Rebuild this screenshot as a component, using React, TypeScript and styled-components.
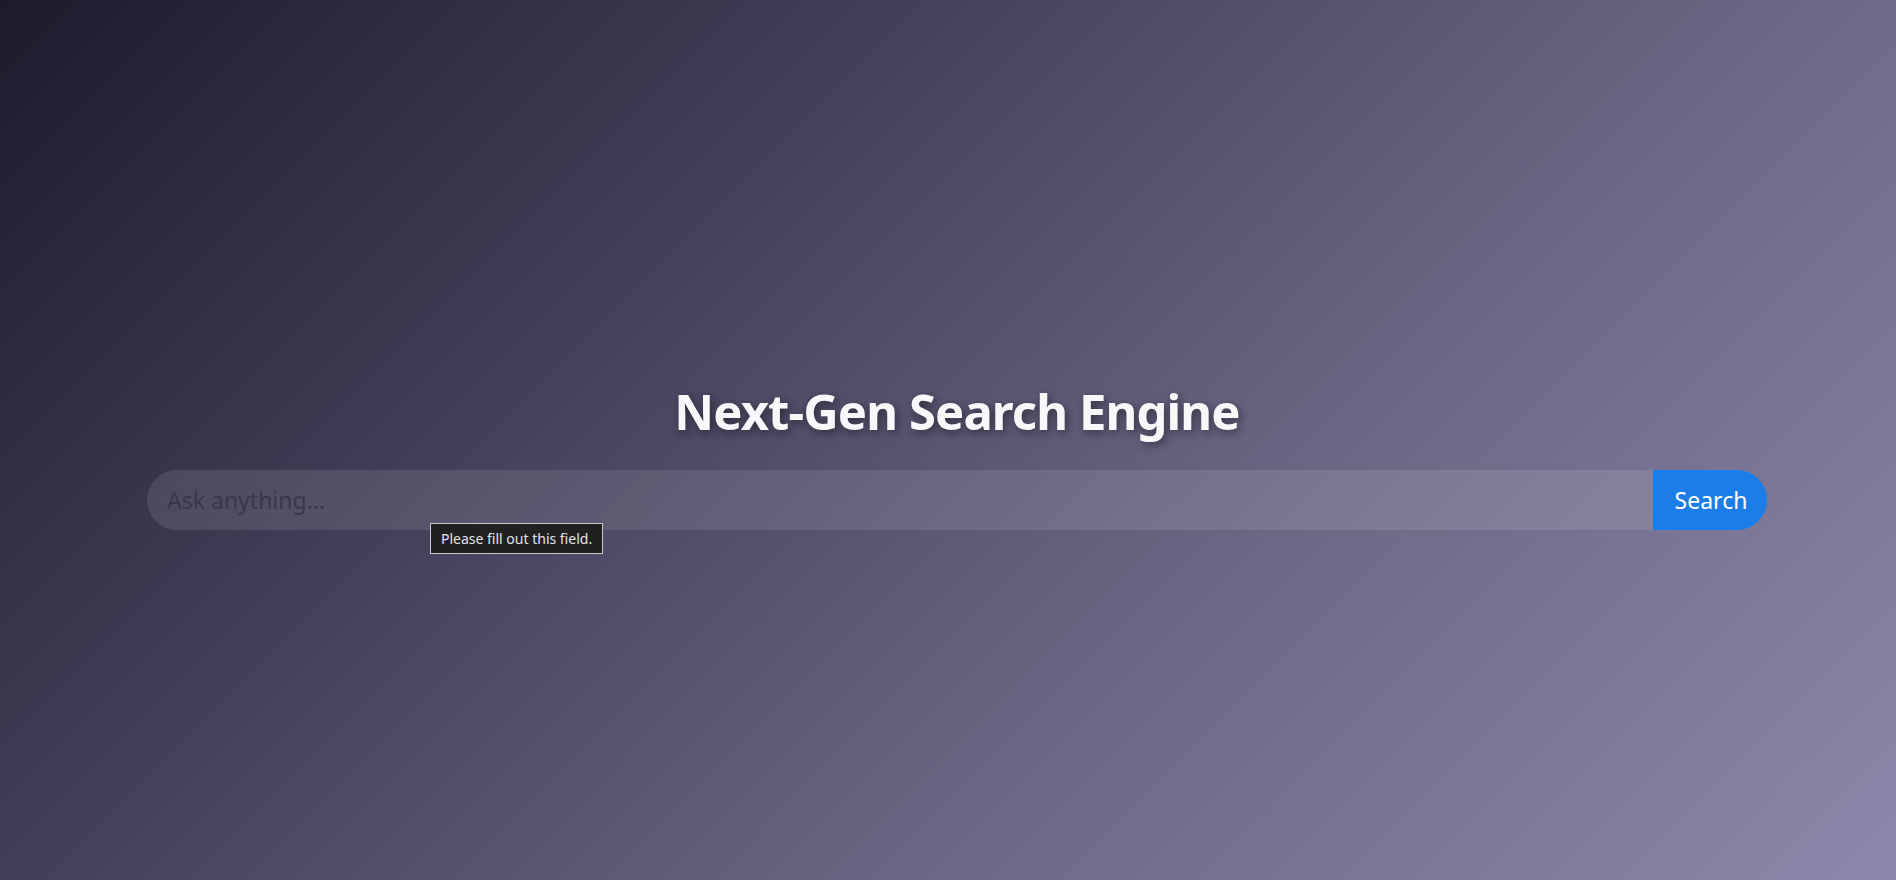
import React from "react";
import styled, { createGlobalStyle } from "styled-components";

const GlobalStyle = createGlobalStyle`
  html, body {
    margin: 0;
    padding: 0;
    height: 100%;
  }
  body {
    font-family: "Noto Sans", "Open Sans", "Liberation Sans", sans-serif;
    overflow: hidden;
  }
  * { box-sizing: border-box; }
`;

const Page = styled.main`
  min-height: 100vh;
  width: 100%;
  display: flex;
  flex-direction: column;
  align-items: center;
  justify-content: center;
  padding: 30px 129px 0 147px;
  background: linear-gradient(135deg, #1d1a2c 0%, #4a4560 38%, #6c6784 65%, #8d88ab 100%);
`;

const Title = styled.h1`
  margin: 0 0 29px;
  font-size: 49px;
  line-height: 60px;
  font-weight: 700;
  color: #f8f8fa;
  letter-spacing: -0.9px;
  text-shadow: 2px 3px 8px rgba(0, 0, 0, 0.45);
  text-align: center;
`;

const SearchForm = styled.form`
  position: relative;
  width: 100%;
  display: flex;
  height: 60px;
  border-radius: 30px;
`;

const SearchInput = styled.input`
  flex: 1;
  min-width: 0;
  height: 100%;
  border: none;
  outline: none;
  padding: 0 20px;
  border-radius: 30px 0 0 30px;
  background: rgba(255, 255, 255, 0.1);
  font-family: "Noto Sans", "Open Sans", sans-serif;
  font-size: 23px;
  color: #2e2b3d;
  &::placeholder {
    color: #3a364c;
  }
`;

const SearchButton = styled.button`
  width: 114px;
  height: 100%;
  border: none;
  border-radius: 0 30px 30px 0;
  background: #1b7de8;
  color: #ffffff;
  font-family: "Noto Sans", "Open Sans", sans-serif;
  font-size: 23px;
  padding: 0 14px 0 16px;
  cursor: pointer;
`;

const Tooltip = styled.div`
  position: absolute;
  left: 283px;
  top: 53px;
  height: 31px;
  padding: 0 10px;
  display: flex;
  align-items: center;
  background: #202020;
  border: 1px solid #c9c9c9;
  color: #e4e4e4;
  font-family: "Noto Sans", "Open Sans", sans-serif;
  font-size: 14px;
  white-space: nowrap;
`;

export default function App() {
  return (
    <>
      <GlobalStyle />
      <Page>
        <Title>Next-Gen Search Engine</Title>
        <SearchForm onSubmit={(e) => e.preventDefault()}>
          <SearchInput type="text" placeholder="Ask anything..." />
          <SearchButton type="submit">Search</SearchButton>
          <Tooltip>Please fill out this field.</Tooltip>
        </SearchForm>
      </Page>
    </>
  );
}
